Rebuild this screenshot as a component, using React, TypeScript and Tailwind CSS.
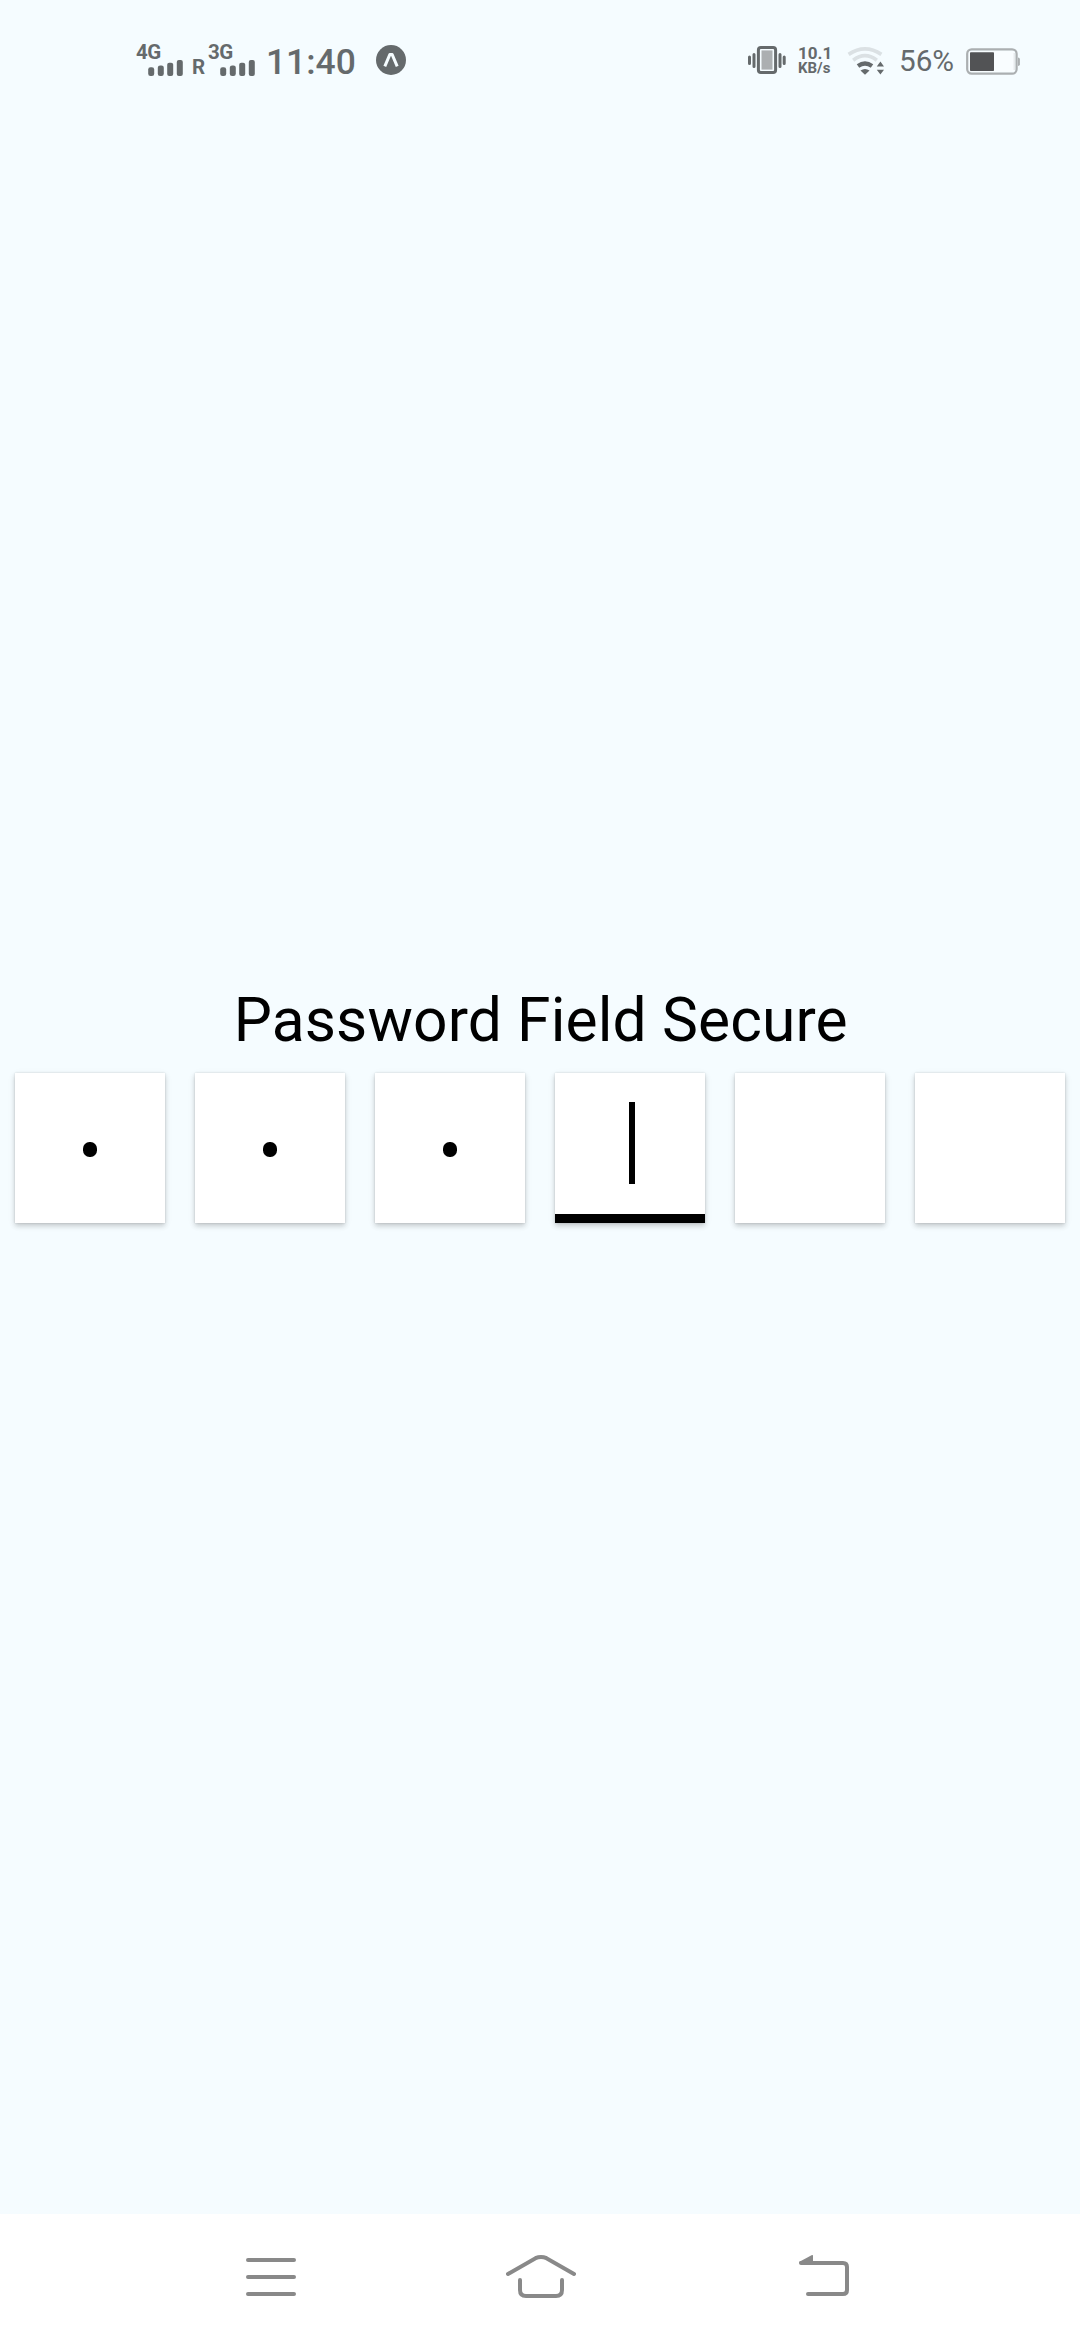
import React from "react";

function SignalBars() {
  return (
    <svg className="h-[17px] w-[36px] shrink-0" viewBox="0 0 36 17" fill="#656a6c">
      <rect x="0.2" y="7.2" width="6" height="8.8" rx="2.3" />
      <rect x="9.8" y="5.5" width="6" height="10.5" rx="2.3" />
      <rect x="19.2" y="2.8" width="6" height="13.2" rx="2" />
      <rect x="28.8" y="0" width="6" height="16" rx="2" />
    </svg>
  );
}

function Signal({ label }: { label: string }) {
  return (
    <div className="flex h-[32px] w-[48px] shrink-0 flex-col items-end justify-between">
      <span className="-mb-[1px] w-full text-[20.5px] leading-[17px] font-bold tracking-[-0.6px]">{label}</span>
      <SignalBars />
    </div>
  );
}

function AppBadge() {
  return (
    <svg className="h-[30px] w-[30px] shrink-0" viewBox="0 0 30 30">
      <circle cx="15" cy="15" r="15" fill="#656a6c" />
      <path d="M8.8 21.4 L13.8 9.6 H16.2 L21.2 21.4" fill="none" stroke="#f5fcff" strokeWidth="3" strokeLinejoin="round" />
    </svg>
  );
}

function VibrateIcon() {
  return (
    <svg className="h-[30px] w-[38px] shrink-0" viewBox="0 0 38 30">
      <rect x="10.4" y="2.4" width="17.2" height="25.2" rx="2.5" fill="none" stroke="#656a6c" strokeWidth="3" />
      <rect x="13.5" y="5.4" width="11" height="19.2" fill="#abafb1" />
      <g stroke="#656a6c" strokeWidth="3" strokeLinecap="round">
        <path d="M1.5 12v6.5M6 9.5v12M32 9.5v12M36.2 12v6.5" />
      </g>
    </svg>
  );
}

function WifiIcon() {
  return (
    <svg className="-ml-[0.5px] h-[30px] w-[37.5px] shrink-0" viewBox="0 0 37.5 30">
      <g fill="none" strokeWidth="3.7">
        <path d="M1.6 9.4 Q18 -1.6 34.4 9.4" stroke="#dbe1e4" />
        <path d="M6.2 15.2 Q18 6.2 29.8 15.2" stroke="#dbe1e4" />
        <path d="M11 21 Q18 16.2 25 21" stroke="#656a6c" strokeWidth="4.4" />
      </g>
      <path d="M13.5 25.4 Q18 22.4 22.5 25.4 L18 29.8Z" fill="#656a6c" />
      <path d="M33.4 16.5 L37 21.5 H29.8Z M33.4 29.5 L37 24.8 H29.8Z" fill="#656a6c" />
    </svg>
  );
}

function BatteryIcon() {
  return (
    <svg className="mt-[4px] h-[28px] w-[55px] shrink-0" viewBox="0 0 55 28">
      <rect x="1.2" y="1.3" width="49.4" height="24.4" rx="4.5" fill="none" stroke="#abafb1" strokeWidth="2.2" />
      <rect x="3.2" y="3.2" width="45.4" height="20.6" rx="2.5" fill="#f9fdff" />
      <path d="M48.2 5v17" stroke="#dfe3e5" strokeWidth="1" />
      <rect x="4" y="4.2" width="24" height="18.8" rx="0.8" fill="#525355" />
      <path d="M52 9.5q1.9 0 1.9 1.8v5q0 1.8-1.9 1.8z" fill="#abafb1" />
    </svg>
  );
}

function StatusBar() {
  return (
    <header className="flex h-[120px] shrink-0 items-center justify-between pr-[59px] pl-[136px] whitespace-nowrap text-[#656a6c]">
      <div className="flex items-center">
        <Signal label="4G" />
        <span className="mt-[14px] ml-[8px] w-[16px] text-[20.5px] leading-[20px] font-bold">R</span>
        <Signal label="3G" />
        <span className="mt-[4px] ml-[10px] w-[110px] text-[35.4px] leading-[40px] font-medium">11:40</span>
        <AppBadge />
      </div>
      <div className="flex items-center">
        <VibrateIcon />
        <div className="ml-[12px] flex w-[49px] flex-col font-bold">
          <span className="text-[17px] leading-[16px]">10.1</span>
          <span className="text-[15px] leading-[15px]">KB/s</span>
        </div>
        <WifiIcon />
        <span className="mt-[2px] ml-[15px] w-[67px] text-[29.7px] leading-[34px]">56%</span>
        <BatteryIcon />
      </div>
    </header>
  );
}

type Cell = { state: "filled" | "active" | "empty" };

const cells: Cell[] = [
  { state: "filled" },
  { state: "filled" },
  { state: "filled" },
  { state: "active" },
  { state: "empty" },
  { state: "empty" },
];

function CodeCell({ state }: Cell) {
  return (
    <div className="flex h-[150px] w-[150px] flex-col bg-white shadow-[0_0_2px_rgba(0,0,0,0.14),0_3px_5px_rgba(0,0,0,0.16),0_2px_9px_rgba(0,0,0,0.06)]">
      {state === "filled" && <span className="mt-[69px] h-[15px] w-[14px] self-center rounded-[6.5px] bg-black" />}
      {state === "active" && (
        <>
          <span className="mt-[29px] ml-[74px] h-[82px] w-[6px] bg-black" />
          <span className="mt-auto h-[9px] w-full bg-black" />
        </>
      )}
    </div>
  );
}

function NavigationBar() {
  return (
    <nav className="flex h-[126px] shrink-0 items-start bg-white pt-[40px] pl-[246px]">
      <svg className="h-[44px] w-[50px]" viewBox="0 0 50 44" stroke="#898989" strokeWidth="4" strokeLinecap="round">
        <path d="M2 6h46M2 23h46M2 40h46" />
      </svg>
      <svg className="ml-[210px] h-[44px] w-[70px]" viewBox="0 0 70 44" fill="none" stroke="#898989" strokeWidth="4" strokeLinecap="round">
        <path d="M2 20 L29.5 4.2 Q35 1.8 40.5 4.2 L68 20" />
        <path d="M14 26v10q0 6 6 6h30q6 0 6-6V26" />
      </svg>
      <svg className="ml-[222px] h-[44px] w-[52px]" viewBox="0 0 52 44" fill="none" stroke="#898989" strokeWidth="4" strokeLinecap="round">
        <path d="M3 9h42q4 0 4 4v23q0 4-4 4H10" />
        <path d="M1 8 L14 1 Q15 0.6 15 2 V10 H2Z" fill="#898989" stroke="none" />
      </svg>
    </nav>
  );
}

export default function App() {
  return (
    <div className="flex h-[2340px] w-[1080px] flex-col overflow-hidden bg-[#f5fcff] font-['Roboto',sans-serif]">
      <StatusBar />
      <main className="flex flex-1 flex-col pt-[866px]">
        <h1 className="h-[80px] pl-[1.5px] text-center text-[60.5px] leading-[70px] font-normal tracking-[0.13px] text-black">
          Password Field Secure
        </h1>
        <div className="mt-[7px] flex justify-between px-[15px]">
          {cells.map((cell, index) => (
            <CodeCell key={index} state={cell.state} />
          ))}
        </div>
      </main>
      <NavigationBar />
    </div>
  );
}
